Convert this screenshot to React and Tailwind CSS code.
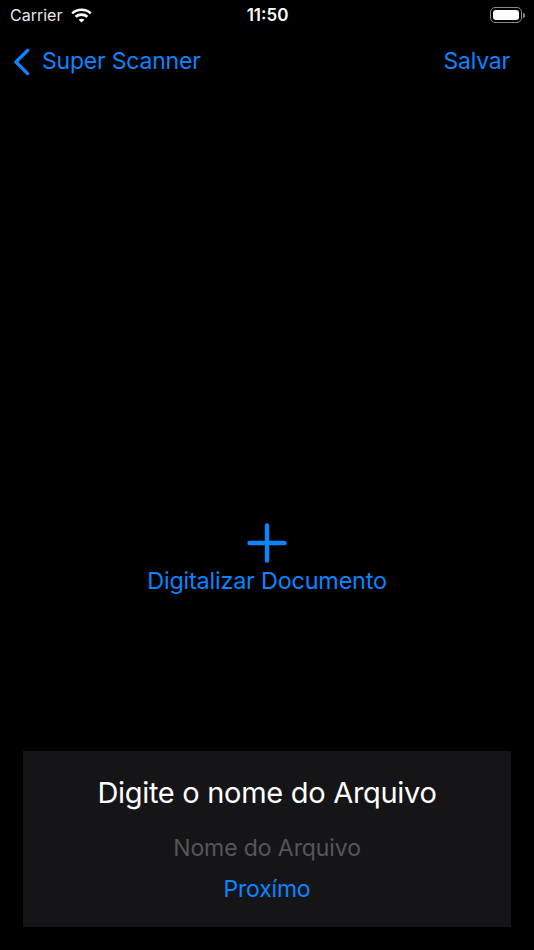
import { Plus } from "lucide-react";

const font = { fontFamily: "Inter, sans-serif" };

function Wifi() {
  return (
    <svg width="21" height="15" viewBox="0 0 21 15" fill="none" stroke="#fff" strokeWidth="2.6">
      <path d="M1.2 5.4C6.4 .6 14.6 .6 19.8 5.4" />
      <path d="M4.6 8.8C7.9 5.9 13.1 5.9 16.4 8.8" />
      <path d="M10.5 14.6 7.6 11.7C9.3 10.5 11.7 10.5 13.4 11.7Z" fill="#fff" stroke="none" />
    </svg>
  );
}

function Battery() {
  return (
    <div className="flex items-center gap-[1px]">
      <div className="w-[32px] h-[16px] rounded-[5px] border border-[#8a8a8a] p-[2px]">
        <div className="w-full h-full rounded-[3px] bg-white" />
      </div>
      <div className="w-[2px] h-[5px] rounded-r-sm bg-[#8a8a8a]" />
    </div>
  );
}

function BackChevron() {
  return (
    <svg width="17" height="28" viewBox="0 0 17 28" fill="none" stroke="currentColor" strokeWidth="3.4" strokeLinecap="round" strokeLinejoin="round">
      <path d="M14.6 2.4 3 14l11.6 11.6" />
    </svg>
  );
}

export default function App() {
  return (
    <div className="w-[534px] h-[950px] bg-black flex flex-col overflow-hidden font-['Inter',sans-serif]" style={font}>
      {/* Status bar */}
      <div className="h-[30px] grid grid-cols-3 items-center pl-[10px] pr-[9px] text-white shrink-0">
        <div className="flex items-center gap-[9px]">
          <span className="text-[16px] text-[#e8e8e8]">Carrier</span>
          <Wifi />
        </div>
        <span className="text-[17px] font-semibold text-center pt-[1px]">11:50</span>
        <div className="flex justify-end">
          <Battery />
        </div>
      </div>

      {/* Nav bar */}
      <div className="h-[61px] flex items-center justify-between pl-[13px] pr-[24px] pt-[2px] text-[#0a84ff] shrink-0">
        <div className="flex items-center gap-[12px]">
          <BackChevron />
          <span className="text-[23px] tracking-[-0.2px]">Super Scanner</span>
        </div>
        <span className="text-[23px] tracking-[-0.2px]">Salvar</span>
      </div>

      {/* Scan button */}
      <div className="flex-1 flex flex-col items-center pt-[422px] text-[#0a84ff]">
        <Plus size={60} strokeWidth={1.75} className="-mb-[6px]" />
        <span className="text-[23.4px] leading-[28px] tracking-[-0.2px]">Digitalizar Documento</span>
      </div>

      {/* File name card */}
      <div className="mx-[23px] mb-[23px] w-[488px] h-[176px] bg-[#151517] flex flex-col items-center pt-[24px] shrink-0">
        <span className="text-[29px] leading-[36px] tracking-[-0.3px] text-white">Digite o nome do Arquivo</span>
        <span className="mt-[22px] text-[23px] leading-[30px] tracking-[-0.1px] text-[#56565a]">Nome do Arquivo</span>
        <span className="mt-[12px] text-[23px] leading-[28px] tracking-[-0.2px] text-[#0a84ff]">Proxímo</span>
      </div>
    </div>
  );
}
